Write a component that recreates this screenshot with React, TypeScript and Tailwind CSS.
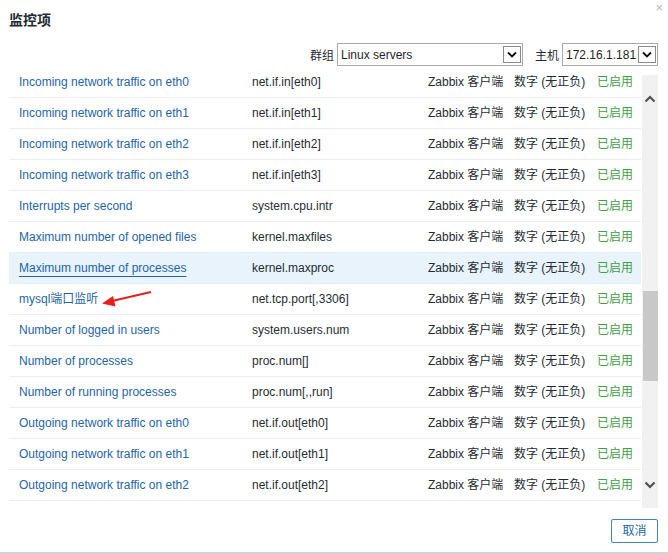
import React from 'react';

const rows: { name: string; key: string; hover?: boolean }[] = [
  { name: 'Incoming network traffic on eth0', key: 'net.if.in[eth0]' },
  { name: 'Incoming network traffic on eth1', key: 'net.if.in[eth1]' },
  { name: 'Incoming network traffic on eth2', key: 'net.if.in[eth2]' },
  { name: 'Incoming network traffic on eth3', key: 'net.if.in[eth3]' },
  { name: 'Interrupts per second', key: 'system.cpu.intr' },
  { name: 'Maximum number of opened files', key: 'kernel.maxfiles' },
  { name: 'Maximum number of processes', key: 'kernel.maxproc', hover: true },
  { name: 'mysql端口监听', key: 'net.tcp.port[,3306]' },
  { name: 'Number of logged in users', key: 'system.users.num' },
  { name: 'Number of processes', key: 'proc.num[]' },
  { name: 'Number of running processes', key: 'proc.num[,,run]' },
  { name: 'Outgoing network traffic on eth0', key: 'net.if.out[eth0]' },
  { name: 'Outgoing network traffic on eth1', key: 'net.if.out[eth1]' },
  { name: 'Outgoing network traffic on eth2', key: 'net.if.out[eth2]' },
];

function SelectBox({ value, width }: { value: string; width: string }) {
  return (
    <div className={`${width} h-[23px] border border-[#a9a9a9] bg-white flex items-center pl-[3px] pr-[1px]`}>
      <span className="flex-1 text-[12px] text-[#1f1f1f] whitespace-nowrap">{value}</span>
      <div className="w-[18px] h-[17px] border border-[#8a8a8a] flex items-center justify-center bg-white">
        <svg width="10" height="7" viewBox="0 0 10 7">
          <path d="M1 1.5 L5 5.5 L9 1.5" fill="none" stroke="#111" strokeWidth="1.8" />
        </svg>
      </div>
    </div>
  );
}

function Caret({ down }: { down?: boolean }) {
  return (
    <svg width="12" height="8" viewBox="0 0 12 8">
      <path d={down ? 'M1.5 1.5 L6 6 L10.5 1.5' : 'M1.5 6.5 L6 2 L10.5 6.5'} fill="none" stroke="#505050" strokeWidth="2.2" />
    </svg>
  );
}

export default function App() {
  return (
    <div
      className="relative w-[668px] h-[554px] bg-white border-b-2 border-[#d2d2d2] text-[#1f2c33]"
      style={{ fontFamily: '"Liberation Sans", "Noto Sans CJK SC", sans-serif' }}
    >
      <div className="h-[40px] flex items-center pl-[9px]">
        <h1 className="text-[14px] font-bold text-[#1f2c33]">监控项</h1>
      </div>
      <button className="absolute top-[1px] right-[5px] text-[13px] leading-none text-[#b5b5b5]">×</button>

      <div className="h-[27px] pt-[3px] flex items-start justify-end pr-[10px] text-[12px]">
        <span className="mr-[3px] mt-[4px]">群组</span>
        <SelectBox value="Linux servers" width="w-[186px]" />
        <span className="ml-[12px] mr-[3px] mt-[4px]">主机</span>
        <SelectBox value="172.16.1.181" width="w-[96px]" />
      </div>

      <div className="h-[441px] flex">
        <div className="ml-[9px] w-[632px]">
          {rows.map((r) => (
            <div
              key={r.key}
              className={`h-[31px] flex items-center border-b border-[#ebeef0] text-[12px] ${r.hover ? 'bg-[#e8f3fb]' : ''}`}
            >
              <div className="w-[243px] pl-[10px]">
                <a className={`text-[#1f65a6] ${r.hover ? 'underline underline-offset-[4px] decoration-[#1f65a6]' : ''}`}>{r.name}</a>
              </div>
              <div className="w-[176px]">{r.key}</div>
              <div className="w-[86px]">Zabbix 客户端</div>
              <div className="w-[83px]">数字 (无正负)</div>
              <div className="flex-1 text-[#429e47]">已启用</div>
            </div>
          ))}
        </div>
        <div className="ml-[1px] w-[16px] mt-[8px] bg-[#f1f1f1] flex flex-col items-center">
          <div className="h-[30px] flex items-end justify-center pb-[2px]">
            <Caret />
          </div>
          <div className="h-[186px]" />
          <div className="w-[15px] h-[90px] bg-[#c8c8c8]" />
          <div className="flex-1" />
          <div className="h-[30px] flex items-start justify-center pt-[3px]">
            <Caret down />
          </div>
        </div>
      </div>

      <div className="pt-[11px] flex justify-end pr-[10px]">
        <button className="w-[47px] h-[24px] border border-[#3f84bd] rounded-[2px] text-[12px] text-[#1f65a6] bg-white">取消</button>
      </div>

      <svg className="absolute left-[98px] top-[287px]" width="58" height="22" viewBox="0 0 58 22">
        <path d="M53 5 L14 14" stroke="#e3201b" strokeWidth="2" />
        <path d="M4 16.5 L15 9 L17.5 19.5 Z" fill="#e3201b" />
      </svg>
    </div>
  );
}
